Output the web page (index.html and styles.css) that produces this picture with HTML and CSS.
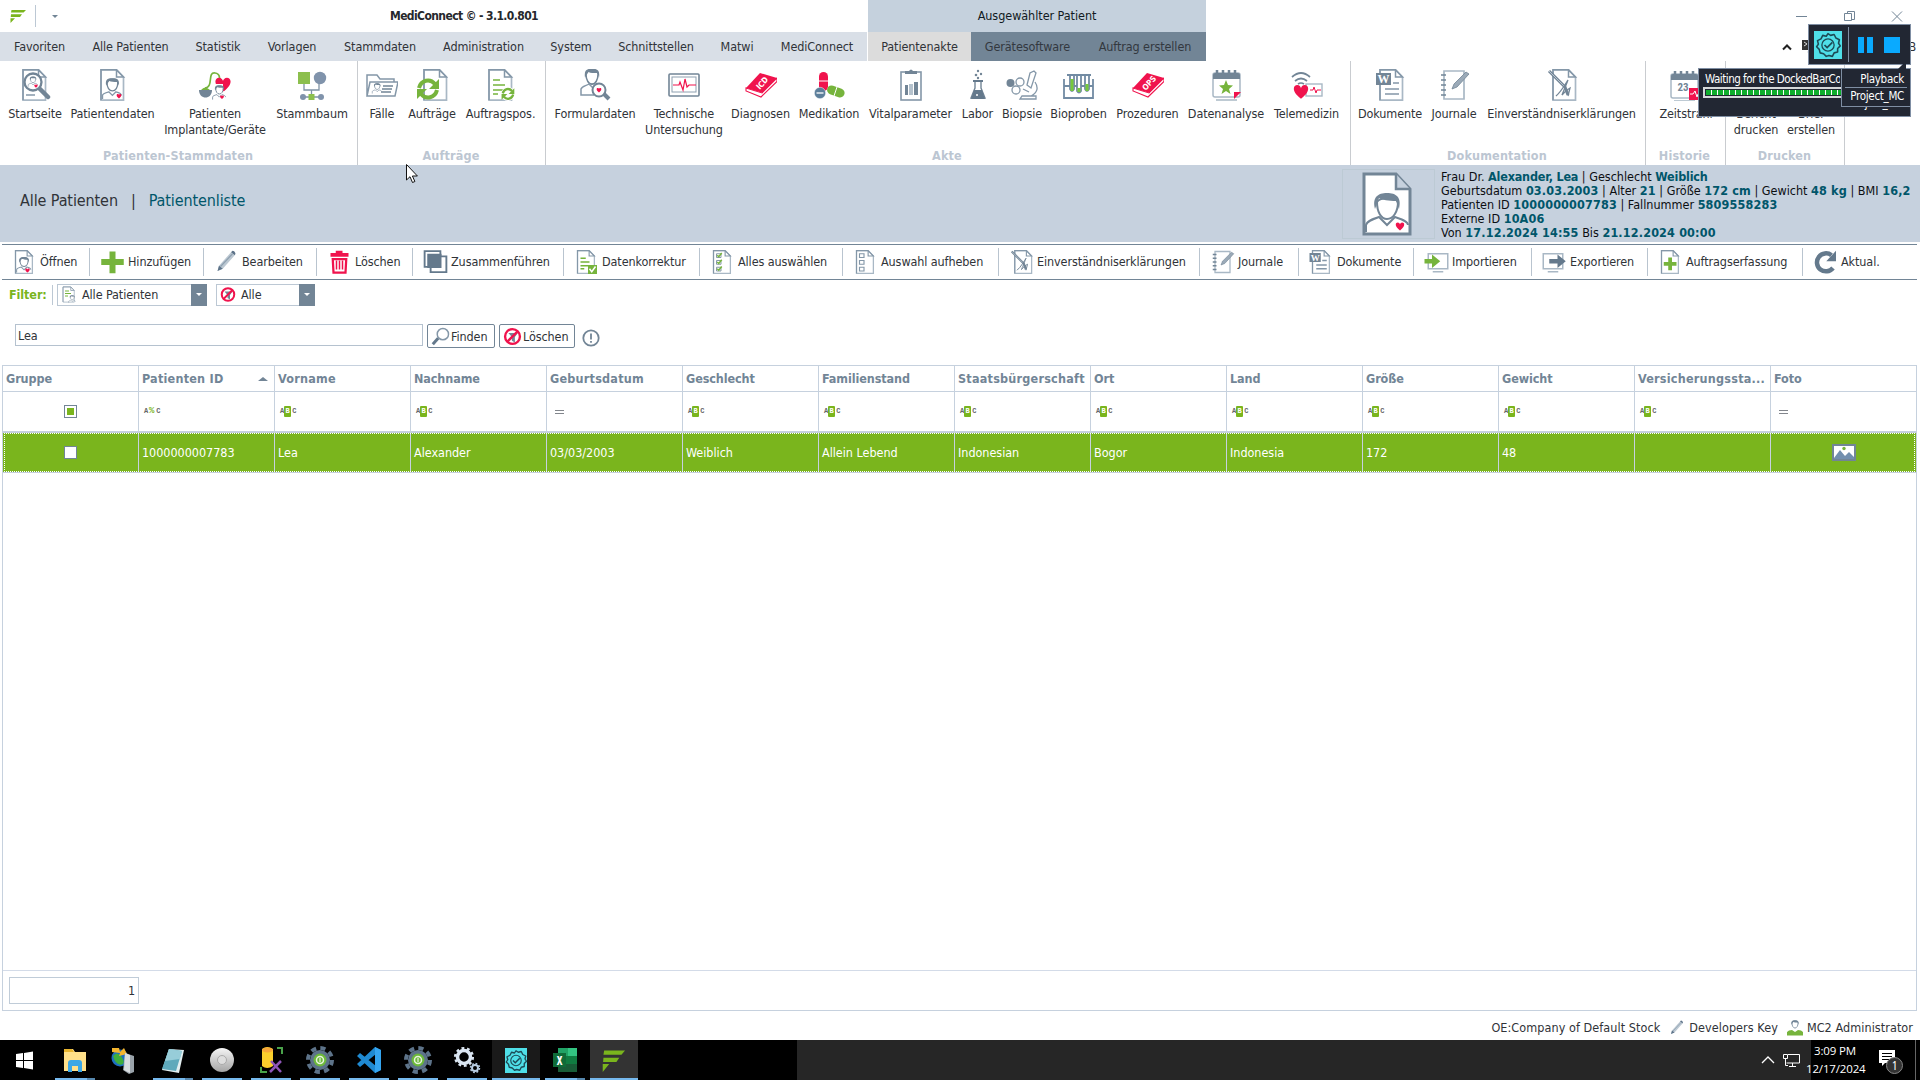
FILE: index.html
```html
<!DOCTYPE html>
<html lang="de">
<head>
<meta charset="utf-8">
<title>MediConnect</title>
<link rel="stylesheet" href="styles.css">
</head>
<body>
<svg class="sprite" aria-hidden="true">
  <defs>
    <g id="heart"><path d="M0 4.500C-6 0-4.500-3.500-2.200-3.500-1-3.500 0-2.500 0-1.500 0-2.500 1-3.500 2.200-3.500 4.500-3.500 6 0 0 4.500z" fill="#f0134d"/></g>
    <g id="page"><path d="M4 .8h15.500l7 7.200v23.200H4z" fill="#fff" stroke="#a9b8c5" stroke-width="1.700"/><path d="M4 31V.8h15.500l7 7.200h-7V1" fill="none" stroke="#8497a8" stroke-width="1.500"/></g>
    <g id="head"><path d="M10 12c0 5 2.500 9 6 9s6-4 6-9c0-3-2-4-6-4s-6 1-6 4z" fill="#fff" stroke="#728596" stroke-width="1.500"/><path d="M9 15c-1-6 1-8 7-8s8 2 7 8l-1.500-4c-4 0-7 0-9-1z" fill="#728596"/></g>
    <g id="person"><use href="#head"/><path d="M5 30v-4c0-2 3-3 7-4l4 4 4-4c4 1 6 2 6 4" fill="none" stroke="#8497a8" stroke-width="1.500"/></g>
    <g id="ring"><path d="M3 11C5 3 14 1 19 7" fill="none" stroke="#76b43c" stroke-width="4"/><path d="M23 2v10H13z" fill="#76b43c"/><path d="M21 13C19 21 10 23 5 17" fill="none" stroke="#76b43c" stroke-width="4"/><path d="M1 22V12h10z" fill="#76b43c"/></g>
    <g id="book"><path d="M1 19 15 4l17 5-14 15z" fill="#f0134d"/><path d="M1 19v3l15 6 16-15.500V9L17 24z" fill="#fff" stroke="#f0134d" stroke-width="1.100"/></g>
    <g id="cal"><rect x="1" y="3" width="27" height="24" rx="2" fill="#fff" stroke="#a9b8c5" stroke-width="1.500"/><path d="M4 30h21" stroke="#a9b8c5" stroke-width="1.500"/><path d="M1 9V5q0-2 2-2h23q2 0 2 2v4z" fill="#728596"/><path d="M5 0v5M11 0v5M17 0v5M23 0v5" stroke="#728596" stroke-width="2.500"/></g>
    <g id="gear"><circle cx="16" cy="16" r="10" fill="#5d7389"/><circle cx="16" cy="16" r="12" fill="none" stroke="#5d7389" stroke-width="4" stroke-dasharray="5.200 4.220"/><circle cx="16" cy="16" r="6.500" fill="#6cb83a"/><circle cx="16" cy="16" r="3.500" fill="none" stroke="#e8f5dd" stroke-width="1.500"/><path d="M16 14v4" stroke="#fff"/></g>
    <g id="pencil"><path d="M4 28l2-7L22 3l5 4-16 18z" fill="#bcc8d2"/><path d="M4 28l2-7 5 4zM22 3l2-2q3 0 4 4l-1 2z" fill="#5d7389"/><path d="M8 22 24 5" stroke="#8ea0b0" stroke-width="1.500"/></g>
    <g id="nofilter"><circle cx="16" cy="16" r="12.500" fill="#fff" stroke="#f0134d" stroke-width="4"/><path d="M9 10h16l-5 7v9l-5-3v-6z" fill="#728596"/><path d="M7 25 25 7" stroke="#f0134d" stroke-width="4"/></g>
    <g id="word"><use href="#page"/><rect x="0" y="4" width="15" height="12" fill="#728596"/><text x="7.500" y="14" text-anchor="middle" font-family="Liberation Serif, serif" font-weight="bold" font-size="12" fill="#fff">W</text><path d="M17 14h6M9 20h14M9 25h14" stroke="#8497a8" stroke-width="1.700"/></g>
    <g id="journal"><path d="M6 2h20v28H6z" fill="#fff" stroke="#a9b8c5" stroke-width="1.700"/><path d="M3 6h5M3 11h5M3 16h5M3 21h5M3 26h5" stroke="#728596" stroke-width="1.700"/><path d="M14 20l2-5L28 3l3 2-12 13z" fill="#9baab8" stroke="#728596" stroke-width=".8"/></g>
    <g id="consent"><use href="#page" transform="translate(3)"/><path d="M3 2l16 16 3 8" stroke="#728596" stroke-width="3" fill="none"/><path d="M3 2l15 15" stroke="#b9c5cf" stroke-width="1"/><path d="M10 27c5-4 10-13 12-16-3 8-5 12-6 15 3-4 6-6 8-7l-2 8" fill="none" stroke="#728596" stroke-width="1.300"/></g>
    <g id="badge"><path d="M16 3l3 2 4-1 2 4 4 2-1 4 2 3-3 3v4l-4 1-2 4-4-1-3 1-3-3-4-1-1-4-3-3 2-3-1-4 4-2 2-4 4 1z" fill="none" stroke="#1d4a55" stroke-width="1.800" stroke-linejoin="round"/><circle cx="16" cy="16" r="7" fill="none" stroke="#1d4a55" stroke-width="1.500"/><path d="M12 16l3 3 6-6" fill="none" stroke="#1d4a55" stroke-width="2"/></g>
    <g id="flogo"><path d="M3 2h29l-5 6H2zM2 12h22l-4 6H1.500zM1 21h9L1 32z"/></g>
  </defs>
</svg>

<header class="titlebar">
  <div class="quick">
    <svg class="logo" viewBox="0 0 32 32" preserveAspectRatio="none" fill="#7ab51d"><use href="#flogo"/></svg>
    <span class="quick-line"></span><span class="caret-down"></span>
  </div>
  <div class="app-title"><b>MediConnect © - 3.1.0.801</b></div>
  <div class="context-title">Ausgewählter Patient</div>
  <svg class="winctl" viewBox="0 0 110 32" fill="none" stroke="#728596"><path d="M4 16.500h11M55.500 13.500v-2h7v8h-3M52.500 13.500h7v7h-7zM100 11.500l10 10M110 11.500l-10 10"/></svg>
</header>

<nav class="tabs">
  <a>Favoriten</a><a>Alle Patienten</a><a>Statistik</a><a>Vorlagen</a><a>Stammdaten</a><a>Administration</a><a>System</a><a>Schnittstellen</a><a>Matwi</a><a>MediConnect</a>
  <i></i><a class="on">Patientenakte</a><a class="ctx">Gerätesoftware</a><a class="ctx">Auftrag erstellen</a>
  <div class="tabs-right">
    <svg width="10" height="8" viewBox="0 0 10 8"><path d="M1 6.500 5 2.500l4 4" fill="none" stroke="#222" stroke-width="2"/></svg>
    <svg width="16" height="14" viewBox="0 0 16 14"><path d="M0 0h16v10H0z" fill="#333"/><path d="M2 2l3 2-3 2M5 12h6" stroke="#ddd" fill="none"/></svg>
    <span>B</span>
  </div>
</nav>

<section class="ribbon">
  <div class="group g1">
    <div class="items">
      <div class="item"><svg viewBox="0 0 32 32"><use href="#page"/><path d="M20 19l9 9" stroke="#728596" stroke-width="4.500" stroke-linecap="round"/><circle cx="14" cy="13" r="8.500" fill="#fff" stroke="#728596" stroke-width="2.300"/><use href="#person" transform="translate(7 4.500) scale(.44)"/><use href="#heart" transform="translate(17 17) scale(.4)"/><path d="M7 26h9" stroke="#8497a8" stroke-width="1.500"/></svg><span>Startseite</span></div>
      <div class="item"><svg viewBox="0 0 32 32"><use href="#page"/><use href="#person" transform="translate(1 3) scale(.9)"/><use href="#heart" transform="translate(22 27) scale(.55)"/></svg><span>Patientendaten</span></div>
      <div class="item"><svg viewBox="0 0 32 32"><path d="M6 19c9-1 2-16 10-15 7 1 4 8 3 14" fill="none" stroke="#76b43c" stroke-width="1.700"/><use href="#heart" transform="translate(24 15) scale(1.800)"/><path d="M0 21h13c0 10-13 10-13 0z" fill="#728596"/><path d="M2 21q4-5 9 0z" fill="#76b43c"/><path d="M13 31v-6l3-3v-7h8v7l4 3v6z" fill="#fff"/><use href="#person" transform="translate(10.500 12) scale(.62)"/><use href="#heart" transform="translate(23 28) scale(.45)"/></svg><span>Patienten<br>Implantate/Geräte</span></div>
      <div class="item"><svg viewBox="0 0 32 32"><path d="M8 12v9h15v-9M15.500 21v6M6 28h20" fill="none" stroke="#7f93a5" stroke-width="1.300"/><path d="M2 3h12v12H2zM12.500 25h6v6h-6z" fill="#8cbf4d"/><circle cx="24" cy="9" r="6.200" fill="#8093ab"/><circle cx="7" cy="28" r="3" fill="#8093ab"/><circle cx="25" cy="28" r="3" fill="#8093ab"/></svg><span>Stammbaum</span></div>
    </div>
    <h3>Patienten-Stammdaten</h3>
  </div>
  <div class="group g2">
    <div class="items">
      <div class="item"><svg viewBox="0 0 32 32"><path d="M1 27V6h10l3 4h14v3M1 27l3-14h28l-3 14z" fill="#fff" stroke="#8497a8" stroke-width="1.500"/><path d="M17 17h10M16 20h10M15 23h10" stroke="#728596" stroke-width="1.400"/><use href="#person" transform="translate(4 11) scale(.45)"/></svg><span>Fälle</span></div>
      <div class="item"><svg viewBox="0 0 32 32"><use href="#page" transform="translate(4)"/><use href="#ring" transform="translate(0 8)"/></svg><span>Aufträge</span></div>
      <div class="item"><svg viewBox="0 0 32 32"><use href="#page"/><path d="M8 11h7M8 16h12M8 21h12M8 25h5" stroke="#76b43c" stroke-width="1.600"/><circle cx="23" cy="25" r="7" fill="#fff"/><use href="#ring" transform="translate(16 18) scale(.58)"/></svg><span>Auftragspos.</span></div>
    </div>
    <h3>Aufträge</h3>
  </div>
  <div class="group g3">
    <div class="items">
      <div class="item"><svg viewBox="0 0 32 32"><use href="#head" transform="translate(-3 -8) scale(1 1.100)"/><path d="M15 26H2v-6c1-3 5-3 8-5l4 4 3-3" fill="none" stroke="#8497a8" stroke-width="1.500"/><path d="M25 25l5 5" stroke="#728596" stroke-width="4"/><circle cx="20" cy="21" r="6.500" fill="#fff" stroke="#728596" stroke-width="2"/><use href="#heart" transform="translate(20 21) scale(.55)"/></svg><span>Formulardaten</span></div>
      <div class="item"><svg viewBox="0 0 32 32"><rect x="1" y="5" width="30" height="22" rx="1" fill="#fff" stroke="#728596" stroke-width="1.600"/><rect x="4" y="8" width="24" height="15" fill="#fff" stroke="#8ea0b0"/><path d="M5 16h6l1-3 3 8 2-11 2 8 2-2h7" fill="none" stroke="#f0134d" stroke-width="1.200"/></svg><span>Technische<br>Untersuchung</span></div>
      <div class="item"><svg viewBox="0 0 32 32"><use href="#book"/><text x="0" y="3" text-anchor="middle" transform="translate(17 14) rotate(-48)" font-family="DejaVu Sans, sans-serif" font-weight="bold" font-size="8" fill="#fff">ICD</text></svg><span>Diagnosen</span></div>
      <div class="item"><svg viewBox="0 0 32 32"><rect x="6" y="3" width="9" height="19" rx="4.500" fill="#f0134d"/><path d="M6 12h9" stroke="#fff"/><rect x="14" y="18" width="18" height="9" rx="4.500" transform="rotate(20 23 22)" fill="#76b43c"/><path d="M24 18l-3 9" stroke="#fff"/><circle cx="7" cy="24" r="5.700" fill="#5d7f9b" stroke="#fff" stroke-width=".5"/><path d="M3.500 24h7" stroke="#fff" stroke-width="1.300"/></svg><span>Medikation</span></div>
      <div class="item"><svg viewBox="0 0 32 32"><rect x="6" y="3" width="20" height="28" fill="#fff" stroke="#8497a8" stroke-width="1.600"/><path d="M10 5V2h4q2-3 4 0h4v3z" fill="#728596"/><path d="M10 16h3v10h-3zM19 13h4v13h-4z" fill="#728596"/><path d="M14 15h4v11h-4z" fill="#b5c2cd"/></svg><span>Vitalparameter</span></div>
      <div class="item"><svg viewBox="0 0 32 32"><path d="M13 12v7L9 29h14l-4-10v-7z" fill="#fff" stroke="#728596" stroke-width="1.400"/><path d="M12 21h8l3 9H9zM11 11h10v2H11z" fill="#64798c"/><g fill="#728596"><circle cx="16" cy="2" r="1.200"/><circle cx="14" cy="6" r="1.300"/><circle cx="19" cy="5" r="1.200"/><circle cx="16" cy="9" r="1.200"/><circle cx="15" cy="26" r="1" fill="#fff"/></g></svg><span>Labor</span></div>
      <div class="item"><svg viewBox="0 0 32 32"><circle cx="4.500" cy="14" r="4" fill="#728596"/><g fill="none" stroke="#8497a8" stroke-width="1.300"><circle cx="14" cy="13" r="4"/><circle cx="10" cy="21" r="4"/><path d="M21 16l3-12 4-2 2 2-5 15zM16 27h14v3H14zM29 13c4 6 2 11-4 14M17 20l6 3"/></g></svg><span>Biopsie</span></div>
      <div class="item"><svg viewBox="0 0 32 32"><path d="M1 10v19h29V10M1 17h29" fill="none" stroke="#728ba3" stroke-width="1.800"/><g fill="#fff" stroke="#728ba3" stroke-width="1.800"><path d="M7 6v14q2 4 4 0V6zM14 6v16q2 3 4 0V6zM22 6v14q2 4 4 0V6z"/></g><path d="M4 6h24" stroke="#728ba3" stroke-width="2"/><path d="M9 10v12M24 15v7M16 19v4" stroke="#76c93c" stroke-width="3"/></svg><span>Bioproben</span></div>
      <div class="item"><svg viewBox="0 0 32 32"><use href="#book"/><text x="0" y="3" text-anchor="middle" transform="translate(17 14) rotate(-48)" font-family="DejaVu Sans, sans-serif" font-weight="bold" font-size="8" fill="#fff">OPS</text></svg><span>Prozeduren</span></div>
      <div class="item"><svg viewBox="0 0 32 32"><g transform="translate(2 1)"><use href="#cal"/><path d="M14 10l2 5 5 .5-4 3.500 1.500 5-4.500-3-4.500 3 1.500-5-4-3.500 5-.5z" fill="#76b43c"/><path d="M22 29v-7h7z" fill="#f0134d"/></g></svg><span>Datenanalyse</span></div>
      <div class="item"><svg viewBox="0 0 32 32"><g fill="none" stroke="#728596" stroke-width="1.700"><path d="M1 8q9-8 18 0M4 12q6-5 12 0M7 15q3-2 6 0"/></g><rect x="15" y="15" width="16" height="12" fill="#fff" stroke="#a9b8c5" stroke-width="1.400"/><path d="M19 21h3l1-3 2 6 1-3h4" fill="none" stroke="#f0134d"/><use href="#heart" transform="translate(10 22) scale(1.700)"/></svg><span>Telemedizin</span></div>
    </div>
    <h3>Akte</h3>
  </div>
  <div class="group g4">
    <div class="items">
      <div class="item"><svg viewBox="0 0 32 32"><use href="#word" transform="translate(2)"/></svg><span>Dokumente</span></div>
      <div class="item"><svg viewBox="0 0 32 32"><use href="#journal"/></svg><span>Journale</span></div>
      <div class="item"><svg viewBox="0 0 32 32"><use href="#consent"/></svg><span>Einverständniserklärungen</span></div>
    </div>
    <h3>Dokumentation</h3>
  </div>
  <div class="group g5">
    <div class="items">
      <div class="item"><svg viewBox="0 0 32 32"><g transform="translate(0 2)"><use href="#cal"/><text x="13" y="20" text-anchor="middle" font-family="Roboto, sans-serif" font-weight="bold" font-size="11" fill="#728596">23</text><path d="M19 17h13v12H19z" fill="#f0134d"/><path d="M20 23h3l2-3 2 6 1-3h3" fill="none" stroke="#fff"/></g></svg><span>Zeitstrahl</span></div>
    </div>
    <h3>Historie</h3>
  </div>
  <div class="group g6">
    <div class="items">
      <div class="item"><svg viewBox="0 0 32 32"><use href="#page"/></svg><span>Bericht<br>drucken</span></div>
      <div class="item"><svg viewBox="0 0 32 32"><use href="#page"/></svg><span>Brief<br>erstellen</span></div>
    </div>
    <h3>Drucken</h3>
  </div>
</section>

<section class="banner">
  <div class="crumbs"><span>Alle Patienten</span><span>|</span><span class="teal">Patientenliste</span></div>
  <div class="photo"><svg viewBox="0 0 50 64"><path d="M2 2h32l14 15v45H2z" fill="#fff" stroke="#728596" stroke-width="3"/><path d="M34 2v15h14" fill="#c6d1de" stroke="#728596" stroke-width="2.500"/><path d="M15 30c0 10 4 17 10 17s11-7 11-17c-2-5-18-5-21 0z" fill="#fff" stroke="#728596" stroke-width="2"/><path d="M13 37c-3-12 3-16 12-16s15 4 12 16l-3-8c-7 0-14-1-17-3z" fill="#728596"/><path d="M4 60v-7c1-4 7-6 13-8l8 8 8-8c6 2 13 4 13 8" fill="none" stroke="#728596" stroke-width="2"/><use href="#heart" transform="translate(38 54)"/></svg></div>
  <div class="patient">
    <p>Frau Dr. <b class="word">Alexander, Lea</b> | Geschlecht <b class="word">Weiblich</b></p>
    <p>Geburtsdatum <b>03.03.2003</b> | Alter <b>21</b> | Größe <b>172 cm</b> | Gewicht <b>48 kg</b> | BMI <b>16,2</b></p>
    <p>Patienten ID <b>1000000007783</b> | Fallnummer <b>5809558283</b></p>
    <p>Externe ID <b>10A06</b></p>
    <p>Von <b>17.12.2024 14:55</b> Bis <b>21.12.2024 00:00</b></p>
  </div>
</section>

<div class="toolbar">
  <div><svg viewBox="0 0 32 32"><use href="#page"/><use href="#person" transform="translate(1 3) scale(.9)"/><use href="#heart" transform="translate(20 27) scale(.7)"/></svg>Öffnen</div>
  <div><svg viewBox="0 0 32 32"><path d="M12 2h8v10h11v8H20v11h-8V20H1v-8h11z" fill="#76b43c"/></svg>Hinzufügen</div>
  <div><svg viewBox="0 0 32 32"><use href="#pencil"/></svg>Bearbeiten</div>
  <div><svg viewBox="0 0 32 32"><path d="M4 4h7V1h9v3h8v5H4z" fill="#f0134d"/><path d="M7 12h18l-1 18H8z" fill="#fff" stroke="#f0134d" stroke-width="3"/><path d="M12 14v12M16 14v12M20 14v12" stroke="#f0134d" stroke-width="2"/></svg>Löschen</div>
  <div><svg viewBox="0 0 32 32"><path d="M1.500 1.500h21v21h-21z" fill="#fff" stroke="#64798c" stroke-width="2.500"/><path d="M9.500 8.500h21v21h-21z" fill="#fff" stroke="#64798c" stroke-width="2.500"/><path d="M5 5h19v19H5z" fill="#64798c"/></svg>Zusammenführen</div>
  <div><svg viewBox="0 0 32 32"><use href="#page"/><path d="M8 11h7M8 16h12M8 21h12M8 25h5" stroke="#76b43c" stroke-width="2"/><path d="M18 20h12v12H18z" fill="#76b43c"/><path d="M20 25l3 4 5-7" fill="none" stroke="#fff" stroke-width="2"/></svg>Datenkorrektur</div>
  <div><svg viewBox="0 0 32 32"><use href="#page"/><path d="M8 5h6v5H8zM8 14h6v5H8zM8 23h6v5H8z" fill="#fff" stroke="#8497a8" stroke-width="1.300"/><path d="M9 7l2 2 4-5M9 16l2 2 4-5M9 25l2 2 4-5" fill="none" stroke="#76b43c" stroke-width="2"/></svg>Alles auswählen</div>
  <div><svg viewBox="0 0 32 32"><use href="#page"/><path d="M8 5h6v5H8zM8 14h6v5H8zM8 23h6v5H8z" fill="#fff" stroke="#8497a8" stroke-width="1.500"/></svg>Auswahl aufheben</div>
  <div><svg viewBox="0 0 32 32"><use href="#consent"/></svg>Einverständniserklärungen</div>
  <div><svg viewBox="0 0 32 32"><use href="#journal"/></svg>Journale</div>
  <div><svg viewBox="0 0 32 32"><use href="#word"/></svg>Dokumente</div>
  <div><svg viewBox="0 0 32 32"><path d="M5 5h26v20H5zM11 29h14" fill="#fff" stroke="#a9b8c5" stroke-width="2"/><path d="M0 12h10V6l11 9-11 9v-6H0z" fill="#76b43c"/></svg>Importieren</div>
  <div><svg viewBox="0 0 32 32"><path d="M1 5h26v20H1zM7 29h14" fill="#fff" stroke="#a9b8c5" stroke-width="2"/><path d="M9 12h11V6l11 9-11 9v-6H9z" fill="#64798c"/></svg>Exportieren</div>
  <div><svg viewBox="0 0 32 32"><use href="#page"/><path d="M13 10h5v6h6v5h-6v6h-5v-6H7v-5h6z" fill="#76b43c"/></svg>Auftragserfassung</div>
  <div><svg viewBox="0 0 32 32"><path d="M26 24A12 12 0 1 1 24 7" fill="none" stroke="#64798c" stroke-width="6"/><path d="M30 1v14H17z" fill="#64798c"/></svg>Aktual.</div>
</div>

<div class="filterbar">
  <b>Filter:</b><i class="vline"></i>
  <div class="combo c1"><svg viewBox="0 0 32 32"><use href="#page"/><path d="M8 9h8M8 14h12M8 19h6" stroke="#76b43c" stroke-width="2"/><use href="#person" transform="translate(12 13) scale(.65)"/></svg><span>Alle Patienten</span><i class="drop"></i></div>
  <div class="combo c2"><svg viewBox="0 0 32 32"><use href="#nofilter"/></svg><span>Alle</span><i class="drop"></i></div>
</div>

<div class="searchbar">
  <div class="input">Lea</div>
  <div class="btn find"><svg viewBox="0 0 32 32"><circle cx="20" cy="12" r="9.500" fill="#fff" stroke="#8497a8" stroke-width="2.500"/><path d="M12 19 3 29" stroke="#64798c" stroke-width="5"/></svg>Finden</div>
  <div class="btn clear"><svg viewBox="0 0 32 32"><use href="#nofilter"/></svg>Löschen</div>
  <svg class="info" viewBox="0 0 18 18"><circle cx="9" cy="9" r="7.700" fill="#fff" stroke="#728596" stroke-width="1.800"/><path d="M9 4.500v6M9 12v1.800" stroke="#728596" stroke-width="1.800"/></svg>
</div>

<main class="grid">
  <div class="row head">
    <div>Gruppe</div><div class="wide">Patienten ID<i class="sort"></i></div><div class="wide">Vorname</div><div>Nachname</div><div class="wide">Geburtsdatum</div><div>Geschlecht</div><div>Familienstand</div><div class="wide">Staatsbürgerschaft</div><div>Ort</div><div>Land</div><div>Größe</div><div>Gewicht</div><div class="wide">Versicherungssta...</div><div>Foto</div>
  </div>
  <div class="row filters">
    <div class="mid"><i class="check some"></i></div>
    <div><span class="abc">A<em class="pct">%</em>C</span></div>
    <div><span class="abc">A<em>B</em>C</span></div>
    <div><span class="abc">A<em>B</em>C</span></div>
    <div><i class="eq"></i></div>
    <div><span class="abc">A<em>B</em>C</span></div>
    <div><span class="abc">A<em>B</em>C</span></div>
    <div><span class="abc">A<em>B</em>C</span></div>
    <div><span class="abc">A<em>B</em>C</span></div>
    <div><span class="abc">A<em>B</em>C</span></div>
    <div><span class="abc">A<em>B</em>C</span></div>
    <div><span class="abc">A<em>B</em>C</span></div>
    <div><span class="abc">A<em>B</em>C</span></div>
    <div><i class="eq"></i></div>
  </div>
  <div class="row selected">
    <div class="mid"><i class="check"></i></div><div>1000000007783</div><div>Lea</div><div>Alexander</div><div>03/03/2003</div><div>Weiblich</div><div>Allein Lebend</div><div>Indonesian</div><div>Bogor</div><div>Indonesia</div><div>172</div><div>48</div><div></div>
    <div class="mid"><svg width="24" height="17" viewBox="0 0 24 17"><path d="M1 1h22v15H1z" fill="#fff" stroke="#728596" stroke-width="2"/><path d="M2 14l6-8 5 6 4-4 5 5v2H2z" fill="#728fae"/><circle cx="12" cy="4.500" r="1.700" fill="#76b43c"/></svg></div>
  </div>
  <div class="void"></div>
  <div class="summary"><div class="count">1</div></div>
</main>

<footer class="status">
  <span class="s1">OE:Company of Default Stock</span>
  <svg viewBox="0 0 32 32"><use href="#pencil"/></svg><span class="s2">Developers Key</span>
  <svg viewBox="0 0 32 32"><use href="#head" transform="translate(0 -7) scale(1 1.100)"/><path d="M0 31v-7q3-4 10-4l6 4 6-4q7 0 10 4v7z" fill="#76b43c"/></svg><span class="s3">MC2 Administrator</span>
</footer>

<div class="taskbar">
  <div class="tb start"><svg viewBox="0 0 32 32"><path d="M8 10l7-1v7H8zM16 9l9-1.500V16h-9zM8 17h7v7l-7-1zM16 17h9v8.500L16 24z" fill="#fff"/></svg></div>
  <div class="tb run more"><svg viewBox="0 0 32 32"><path d="M5 5h9l2 3h11v19H5z" fill="#ffe08a"/><path d="M5 5h8l2 3H5z" fill="#e8b530"/><path d="M9 28v-9q0-3 3-3h8q3 0 3 3v9h-4v-6h-6v6z" fill="#3ba7e6"/></svg></div>
  <div class="tb"><svg viewBox="0 0 32 32"><circle cx="12" cy="14" r="8.500" fill="#1d6fc0"/><path d="M5 12q4-5 8 0t2 8q-7 3-10-8z" fill="#3fae3c"/><path d="M4 4h7l1 4 4-4 3 6-8 2 1-3-8-1z" fill="#f4b52e"/><path d="M17 9l9 3v16l-5 2-6-4z" fill="#9aa3aa"/><path d="M17 9l5 2v18l-6-3z" fill="#d9dde0"/></svg></div>
  <div class="tb run more"><svg viewBox="0 0 32 32"><path d="M12 5l15 1-5 23-17-3z" fill="#e2eef0"/><path d="M12 5l13 2-6 20-14-2z" fill="#5fa9bb"/><path d="M12 5l13 2-2 8-15 2z" fill="#97cdd9"/></svg></div>
  <div class="tb run"><svg viewBox="0 0 32 32"><defs><linearGradient id="silver" x2="0" y2="1"><stop stop-color="#f5f5f5"/><stop offset="1" stop-color="#a5a5a5"/></linearGradient></defs><circle cx="16" cy="16" r="12" fill="url(#silver)"/><circle cx="16" cy="16" r="4.500" fill="#dedede" stroke="#aaa"/></svg></div>
  <div class="tb run"><svg viewBox="0 0 32 32"><path d="M7 5q5-4 11 0v17q-6 4-11 0z" fill="#fbd02c"/><ellipse cx="12.500" cy="6" rx="5.500" ry="2.500" fill="#f6a73a"/><path d="M22 4h5v6M6 23v5h6" fill="none" stroke="#4aa34a" stroke-width="2"/><path d="M16 17l10 11M26 17 15 28" stroke="#8e55b8" stroke-width="2.500"/></svg></div>
  <div class="tb run"><svg viewBox="0 0 32 32"><use href="#gear"/></svg></div>
  <div class="tb run"><svg viewBox="0 0 32 32"><path d="M22 3l6 3v20l-6 3L4 12l3-3 16 13V10L7 23l-3-3z" fill="#1f8ad2"/><path d="M22 3l6 3v20l-6 3z" fill="#35a5f0"/></svg></div>
  <div class="tb run"><svg viewBox="0 0 32 32"><use href="#gear"/></svg></div>
  <div class="tb run"><svg viewBox="0 0 32 32"><circle cx="13" cy="13" r="6.500" fill="none" stroke="#dbe6f2" stroke-width="3.500"/><circle cx="13" cy="13" r="8.800" fill="none" stroke="#dbe6f2" stroke-width="2.500" stroke-dasharray="2.800 2.730"/><circle cx="24" cy="24" r="3" fill="none" stroke="#b8cde2" stroke-width="2"/><circle cx="24" cy="24" r="4.500" fill="none" stroke="#b8cde2" stroke-width="1.500" stroke-dasharray="1.800 1.730"/></svg></div>
  <div class="tb run lit"><svg viewBox="0 0 32 32"><path d="M5 4h22v25H5z" fill="#4fdfe8"/><use href="#badge" transform="translate(4 4.500) scale(.75)"/></svg></div>
  <div class="tb run more"><svg viewBox="0 0 32 32"><path d="M9 4h19v24H9z" fill="#107c41"/><path d="M9 4h10v8H9z" fill="#21a366"/><path d="M19 4h9v8h-9z" fill="#33c481"/><path d="M19 20h9v8H9v-8z" fill="#185c37"/><path d="M4 9h13v14H4z" fill="#0f6b38"/><text x="10.500" y="20.500" text-anchor="middle" font-family="Open Sans, sans-serif" font-weight="bold" font-size="12" fill="#fff">X</text></svg></div>
  <div class="tb run active"><svg viewBox="0 0 32 32" fill="#7ab51d"><use href="#flogo" transform="translate(4 5) scale(.72)"/></svg></div>
  <div class="tray">
    <svg class="chev" viewBox="0 0 14 8"><path d="M1 7l6-6 6 6" fill="none" stroke="#fff" stroke-width="1.300"/></svg>
    <svg class="net" viewBox="0 0 17 14" fill="none" stroke="#fff"><path d="M5 1.500h11.500v8.500H3.500M9.500 10v3M6 13.500h7M.5 1.500h4v4h-4zM2.500 5.500v7H5"/></svg>
    <div class="clock">3:09 PM<br>12/17/2024</div>
    <svg class="note" viewBox="0 0 26 26"><path d="M1 1h16v13H7l-3 3v-3H1z" fill="#fff"/><path d="M4 4.500h10M4 7.500h10M4 10.500h7" stroke="#000"/><circle cx="16.500" cy="16.500" r="8" fill="#333" stroke="#888"/><text x="16.500" y="21" text-anchor="middle" font-family="Open Sans, sans-serif" font-size="12" fill="#fff">1</text></svg>
    <i class="peek"></i>
  </div>
</div>

<div class="waiting"><span>Waiting for the DockedBarCo</span><div class="bar"></div><small>Project_MC</small></div>
<div class="tip"><span>Playback</span><span>Project_MC</span></div>
<div class="player">
  <svg class="tile" viewBox="0 0 32 32"><use href="#badge"/></svg><i></i>
  <svg class="keys" viewBox="0 0 42 16"><path d="M0 0h6v16H0zM9 0h6v16H9zM26 0h16v16H26z" fill="#0aaaff"/></svg>
</div>
<svg class="notch" viewBox="0 0 8 8"><path d="M0 8h8V0z" fill="#222733"/></svg>
<svg class="cursor" viewBox="0 0 12 19"><path d="M.5.5v15.500l3.500-3.300 2.500 5.800 2.400-1-2.500-5.500h5z" fill="#fff" stroke="#111"/></svg>
</body>
</html>
```

FILE: styles.css
```css
* { box-sizing: border-box; }
body {
  margin: 0; width: 1920px; height: 1080px; overflow: hidden; position: relative;
  display: flex; flex-direction: column; background: #fff; color: #303338;
  font: 12.5px/16px "DejaVu Sans Condensed", "DejaVu Sans", sans-serif;
  font-stretch: condensed; letter-spacing: -0.1px; white-space: nowrap;
}
svg { display: block; flex: none; }
.sprite { position: absolute; width: 0; height: 0; }

.titlebar { height: 32px; display: grid; grid-template-columns: 60px 808px 338px 1fr; }
.quick { display: flex; align-items: center; padding-left: 10px; }
.logo { width: 16px; height: 14px; }
.quick-line { width: 1px; height: 22px; background: #bcc8d4; margin-left: 9px; }
.caret-down { border: 3px solid transparent; border-top: 3px solid #728596; border-bottom: 0; margin-left: 16px; }
.app-title { display: flex; align-items: center; color: #26282c; padding-left: 330px; font-size: 12px; letter-spacing: -0.6px; }
.context-title { background: #c5d1dd; color: #111a22; display: flex; align-items: center; justify-content: center; letter-spacing: -0.05px; }
.winctl { width: 110px; height: 32px; justify-self: end; margin-right: 18px; overflow: visible; }

.tabs {
  height: 29px; display: grid; align-items: stretch;
  grid-template-columns: 79px 103px 72px 76px 100px 107px 68px 102px 60px 100px 1px 103px 113px 122px 1fr;
}
.tabs a { display: flex; align-items: center; justify-content: center; padding-top: 1px; background: #d9dfe7; }
.tabs a.on { background: #dcdcdc; }
.tabs a.ctx { background: #728596; color: #33383f; }
.tabs-right { display: flex; align-items: center; justify-content: flex-end; gap: 10px; padding-right: 4px; }
.tabs-right span { margin-left: 80px; }

.ribbon { height: 104px; display: grid; grid-template-columns: 358px 188px 805px 295px 80px 119px; }
.group { border-right: 1px solid #c9ccd0; display: flex; flex-direction: column; padding-left: 4px; }
.items { height: 87px; padding-top: 8px; display: grid; }
.item { display: flex; flex-direction: column; align-items: center; gap: 5px; text-align: center; min-width: 0; }
.item svg { width: 32px; height: 32px; }
.item span { display: block; }
.g1 .items { grid-template-columns: 62px 93px 112px 82px; }
.g2 .items { grid-template-columns: 40px 60px 77px; }
.g3 { padding-left: 3px; }
.g3 .items { grid-template-columns: 92px 86px 67px 70px 93px 41px 48px 65px 73px 84px 77px; }
.g4 { padding-left: 3px; }
.g4 .items { grid-template-columns: 72px 56px 159px; }
.g5 { padding-left: 0; }
.g5 .items { grid-template-columns: 80px; }
.g6 .items { grid-template-columns: 52px 58px; }
h3 { margin: 0 0 0 -5px; font-size: 12.5px; line-height: 16px; color: #bcc6d2; text-align: center; letter-spacing: 0.15px; }
.g5 h3 { margin-left: -2px; }

.banner { height: 77px; background: #c6d1de; display: grid; grid-template-columns: 1342px 93px 1fr; }
.crumbs { display: flex; align-items: center; gap: 13px; padding: 0 0 6px 20px; font-size: 16px; }
.teal, .patient b { color: #00566a; }
.photo { margin: 4px 0 3px; border: 1px solid #bccad4; display: flex; justify-content: center; align-items: center; }
.photo svg { width: 50px; height: 64px; margin-right: 3px; }
.patient { padding: 5px 0 0 6px; color: #0c0e12; letter-spacing: 0; }
.patient p { margin: 0; line-height: 14px; }
.patient b { letter-spacing: 0.15px; }
.patient .word { letter-spacing: -0.2px; }

.toolbar {
  margin: 2px 3px 0 2px; height: 36px; border: solid #728596; border-width: 1px 0;
  display: grid; align-items: center;
  grid-template-columns: 88px 114px 113px 96px 151px 136px 143px 156px 201px 99px 115px 118px 116px 155px 1fr;
}
.toolbar div { display: flex; align-items: center; height: 28px; padding-left: 10px; gap: 3px; border-right: 1px solid #b9c4cf; }
.toolbar div:last-child { border: 0; }
.toolbar svg { width: 25px; height: 24px; }

.filterbar { height: 30px; display: flex; align-items: center; padding: 0 0 1px 9px; }
.filterbar b { color: #7ab51d; width: 43px; }
.vline { width: 1px; height: 20px; background: #bcc8d4; margin-right: 4px; }
.combo { height: 22px; border: 1px solid #bcc8d4; display: flex; align-items: center; padding-left: 3px; }
.combo svg { width: 16px; height: 17px; }
.combo span { flex: 1; padding-left: 5px; }
.drop { width: 16px; height: 22px; background: #728596; display: flex; align-items: center; justify-content: center; margin: -1px; }
.drop::after { content: ""; border: 3px solid transparent; border-top-color: #fff; border-bottom: 0; }
.c1 { width: 150px; margin-right: 9px; }
.c2 { width: 99px; }

.searchbar { height: 55px; padding: 14px 0 0 15px; display: flex; align-items: flex-start; }
.input { width: 408px; height: 22px; border: 1px solid #b5c2cf; padding: 3px 2px; margin-right: 4px; }
.btn { height: 24px; border: 1px solid #728596; border-radius: 2px; display: flex; align-items: center; gap: 1px; padding: 1px 0 0 3px; margin-right: 4px; }
.btn svg { width: 19px; height: 19px; }
.find { width: 68px; }
.clear { width: 76px; margin-right: 7px; }
.info { width: 18px; height: 18px; margin-top: 5px; }

.grid { margin: 0 3px 0 2px; height: 646px; border: 1px solid #c6d1de; display: flex; flex-direction: column; }
.row { display: grid; grid-template-columns: repeat(13, 136px) 1fr; border-bottom: 1px solid #c6d1de; }
.row > div { display: flex; align-items: center; padding-left: 3px; border-right: 1px solid #c6d1de; min-width: 0; }
.row > div:last-child { border-right: 0; }
.row > .mid { justify-content: center; padding: 0; }
.head { height: 26px; color: #728596; font-weight: bold; letter-spacing: -0.1px; }
.head .wide { letter-spacing: 0.22px; }
.sort { border: 5px solid transparent; border-bottom: 4px solid #728596; border-top: 0; margin-left: auto; margin-right: 6px; }
.filters { height: 40px; }
.filters > div { padding-left: 5px; }
.selected { height: 41px; background: #7ab51d; color: #fff; outline: 1px dotted #fff; outline-offset: -2px; border-top: 1px solid #c6d1de; letter-spacing: -0.03px; }
.check { width: 13px; height: 13px; border: 1px solid #728596; background: #fff; padding: 2px; }
.some { background: #7ab51d content-box; }
.abc { display: flex; align-items: center; font: bold 7px/11px "Liberation Mono", monospace; color: #666; letter-spacing: 0; }
.abc em { font-style: normal; background: #7ab51d; color: #fff; width: 7px; text-align: center; margin: 0 1px 0 0; border-radius: 1px; }
.abc .pct { background: none; color: #7ab51d; font-size: 9px; }
.eq { width: 9px; height: 4px; border: solid #82868c; border-width: 1px 0; margin-left: 3px; }
.void { flex: 1; }
.summary { height: 40px; border-top: 1px solid #d3dbe8; padding: 6px; }
.count { width: 130px; height: 27px; border: 1px solid #c0ccd8; padding: 5px 3px; text-align: right; }

.status { flex: 1; display: flex; align-items: center; justify-content: flex-end; padding: 5px 7px 0 0; gap: 4px; }
.status svg { width: 16px; height: 16px; }
.status span { letter-spacing: 0.07px; }
.s1, .s2 { margin-right: 5px; }

.taskbar { height: 40px; background: linear-gradient(90deg, #000 797px, #262626 797px, #262626 1811px, #000 1811px); display: flex; gap: 1px; }
.tb { width: 48px; height: 40px; padding-top: 4px; position: relative; display: flex; justify-content: center; }
.start { width: 50px; padding-right: 2px; }
.tb svg { width: 32px; height: 32px; }
.run::after { content: ""; position: absolute; left: 4px; right: 4px; bottom: 0; height: 2px; background: #76b9ed; }
.more::after { background: linear-gradient(90deg, #76b9ed 32px, #5687ae 32px); }
.lit { background: #1a1a1a; }
.active { background: #333; }
.lit::after, .active::after { left: 0; right: 0; }
.tray { flex: 1; display: flex; align-items: center; justify-content: flex-end; color: #fff; letter-spacing: 0; }
.chev { width: 14px; height: 8px; margin-right: 8px; }
.net { width: 17px; height: 14px; margin-right: 6px; }
.clock { width: 58px; text-align: center; font: 11.5px/18px "Open Sans", sans-serif; letter-spacing: -0.15px; margin-right: 14px; }
.note { width: 26px; height: 26px; margin: 4px 11px 0 0; }
.peek { width: 1px; height: 40px; background: #666; margin-right: 4px; }

/* Playback overlay and pointer float above the application window */
.waiting, .tip, .player { position: absolute; background: #222733; border: 1px solid #7f8ea3; color: #fff; }
.waiting { left: 1698px; top: 68px; width: 213px; height: 49px; overflow: hidden; }
.waiting span { display: block; width: 141px; overflow: hidden; padding: 2px 0 0 6px; font-size: 11.5px; letter-spacing: -0.5px; }
.waiting .bar { margin: 0 0 0 4px; width: 150px; height: 11px; border: 2px solid #d5d8da; background: #fff repeating-linear-gradient(90deg, #0fae2d 0 5px, #fff 5px 6px) content-box; padding: 1px; }
.waiting small { display: block; font-size: 11.5px; text-align: right; padding-right: 7px; line-height: 16px; margin-top: -3px; letter-spacing: -0.3px; }
.tip { left: 1841px; top: 68px; width: 70px; height: 39px; padding: 2px 3px; display: flex; flex-direction: column; text-align: right; }
.tip span { padding-right: 3px; height: 16px; font-size: 11.5px; letter-spacing: -0.3px; }
.tip span:first-child { border-bottom: 1px solid #7f8ea3; height: 17px; }
.player { left: 1808px; top: 24px; width: 103px; height: 41px; display: flex; align-items: center; padding-left: 5px; }
.tile { width: 28px; height: 28px; background: #4fdfe8; }
.player i { width: 1px; height: 35px; background: #7f8ea3; margin: 0 9px 0 6px; }
.keys { width: 42px; height: 16px; }
.notch { position: absolute; left: 1898px; top: 61px; width: 8px; height: 8px; }
.cursor { position: absolute; left: 406px; top: 164px; width: 12px; height: 19px; }
```
